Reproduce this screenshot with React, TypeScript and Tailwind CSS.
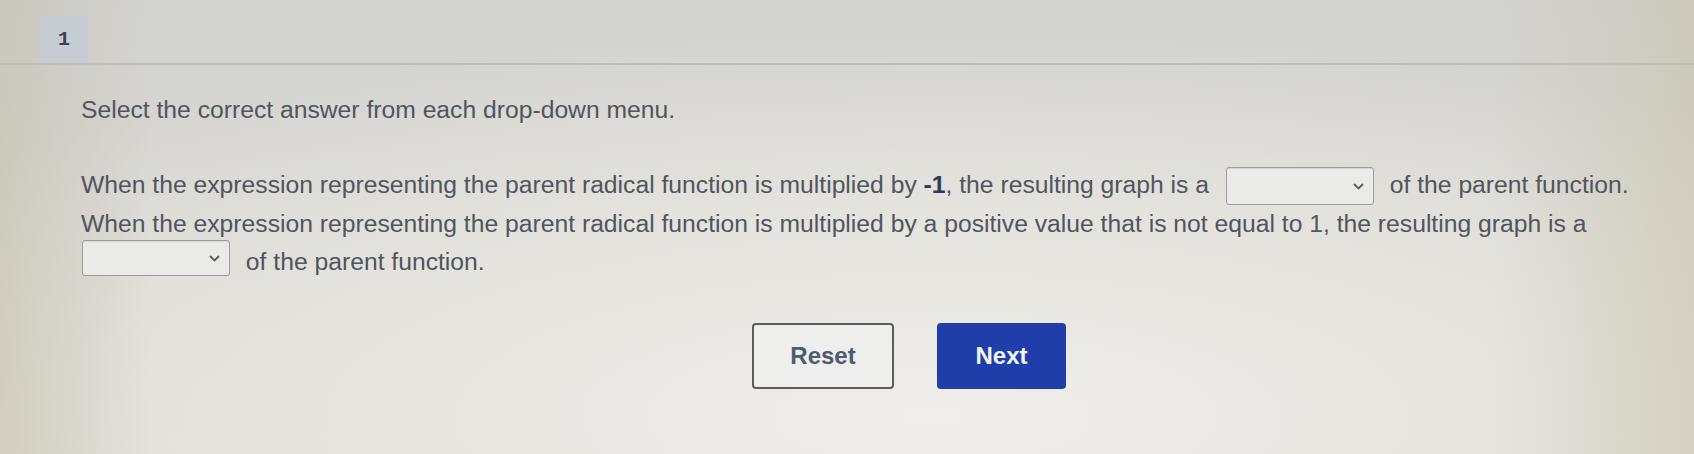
import React from "react";

function Chevron() {
  return (
    <svg width="11" height="7" viewBox="0 0 11 7" className="shrink-0">
      <polyline points="1,1 5.5,5.5 10,1" fill="none" stroke="#5a5d63" strokeWidth="1.8" />
    </svg>
  );
}

// Closed select box: an empty box with a chevron on its right edge.
function Dropdown({ className }: { className: string }) {
  return (
    <span
      className={
        "inline-block w-[148px] overflow-hidden rounded-[3px] border border-[#9c9c9a] bg-[#eaeae8] shadow-[inset_0_1px_0_#d6d6d4] " +
        className
      }
    >
      <span className="flex h-full items-center justify-end pr-[9px]">
        <Chevron />
      </span>
    </span>
  );
}

export default function App() {
  return (
    <div className="h-[454px] w-[1694px] overflow-hidden bg-[linear-gradient(90deg,rgba(196,190,172,0.55)_0%,rgba(196,190,172,0)_9%,rgba(196,190,172,0)_88%,rgba(200,194,172,0.55)_100%),radial-gradient(ellipse_75%_85%_at_55%_92%,#efeeea_0%,#e6e5e0_45%,rgba(230,229,224,0)_100%),linear-gradient(180deg,#d2d2d0_0%,#d8d7d2_45%,#dedcd2_100%)] font-['Liberation_Sans',Arial,sans-serif] text-[#50555e]">
      {/* question number strip */}
      <div className="flex h-[65px] items-start border-b-2 border-[#bdbdba] pl-[40px] pt-[16px]">
        <div className="flex h-[47px] w-[48px] items-center justify-center bg-[#c6ccd4] font-['Liberation_Mono',monospace] text-[20px] font-bold text-[#3c4250]">
          1
        </div>
      </div>

      <div className="pl-[81px] pr-[16px]">
        <p className="mt-[26px] text-[24.7px] leading-[38px]">
          Select the correct answer from each drop-down menu.
        </p>

        <div className="mt-[37px] text-[24.7px] leading-[38px]">
          <p>
            When the expression representing the parent radical function is multiplied by{" "}
            <span className="font-bold text-[#2f3a58]">-1</span>, the resulting graph is a{" "}
            <Dropdown className="ml-[10px] mr-[9px] h-[38px] align-[-12px]" /> of the parent function.
          </p>
          <p>
            When the expression representing the parent radical function is multiplied by a positive value that is not
            equal to 1, the resulting graph is a{" "}
            <Dropdown className="-mt-[6px] ml-[1px] mr-[9px] h-[36px] align-[-6px]" /> of the parent function.
          </p>
        </div>

        <div className="mt-[42px] flex gap-[43px] pl-[671px]">
          <button className="flex h-[66px] w-[142px] items-center justify-center rounded-[4px] border-2 border-[#5c5c5c] bg-[#eeeeec] text-[24px] font-bold text-[#4e5a72]">
            Reset
          </button>
          <button className="flex h-[66px] w-[129px] items-center justify-center rounded-[4px] bg-[#1f3ea9] text-[24px] font-bold text-[#f2f5ff]">
            Next
          </button>
        </div>
      </div>
    </div>
  );
}
